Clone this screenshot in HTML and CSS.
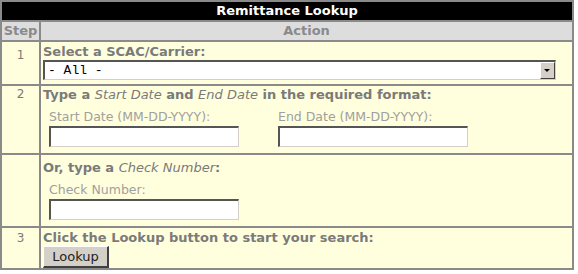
FILE: index.html
```html
<!DOCTYPE html>
<html lang="en">
<head>
    <meta charset="UTF-8">
    <title>Remittance Lookup</title>
    <link rel="stylesheet" href="styles.css">
</head>
<body>

<table class="lookup">
    <tr>
        <th colspan="2" class="title">Remittance Lookup</th>
    </tr>
    <tr class="head">
        <th class="step">Step</th>
        <th>Action</th>
    </tr>
    <tr class="row-scac">
        <td class="num">1</td>
        <td>
            <div class="prompt">Select a SCAC/Carrier:</div>
            <div class="select-wrap">
                <select id="scac">
                    <option>- All -</option>
                </select>
                <span class="arrow"></span>
            </div>
        </td>
    </tr>
    <tr class="row-dates">
        <td class="num">2</td>
        <td>
            <div class="prompt">Type a <em>Start Date</em> and <em>End Date</em> in the required format:</div>
            <div class="fields">
                <label class="field">
                    <span>Start Date (MM-DD-YYYY):</span>
                    <input type="text" id="startDate">
                </label>
                <label class="field">
                    <span>End Date (MM-DD-YYYY):</span>
                    <input type="text" id="endDate">
                </label>
            </div>
        </td>
    </tr>
    <tr class="row-check">
        <td class="num"></td>
        <td>
            <div class="prompt">Or, type a <em>Check Number</em>:</div>
            <div class="fields">
                <label class="field">
                    <span>Check Number:</span>
                    <input type="text" id="checkNumber">
                </label>
            </div>
        </td>
    </tr>
    <tr class="row-submit">
        <td class="num">3</td>
        <td>
            <div class="prompt">Click the Lookup button to start your search:</div>
            <button type="button" id="lookupBtn">Lookup</button>
        </td>
    </tr>
</table>

</body>
</html>
```

FILE: styles.css
```css
/* Page */
body {
    margin: 0;
    font-family: 'DejaVu Sans', Verdana, sans-serif;
    font-size: 12.5px;
    color: #7a7a7a;
    background-color: #fff;
}

/* Lookup table */
.lookup {
    width: 574px;
    border-collapse: collapse;
    border: 2px solid #8a8a8a;
}

.lookup th,
.lookup td {
    border: 2px solid #8a8a8a;
    padding: 0 2px;
    text-align: left;
    vertical-align: top;
}

.lookup td {
    background-color: #ffffdd;
}

.lookup .title {
    background-color: #000;
    color: #fff;
    font-size: 13px;
    font-weight: bold;
    line-height: 18px;
    padding: 0;
    text-align: center;
    vertical-align: middle;
}

.head th {
    background-color: #dddddd;
    color: #8a8a8a;
    font-size: 13px;
    line-height: 18px;
    text-align: center;
    vertical-align: middle;
}

.lookup .step {
    width: 37px;
    padding: 0;
}

.lookup .num {
    text-align: center;
    color: #7a7a7a;
    font-size: 12px;
    line-height: 15px;
}

.prompt {
    font-size: 13px;
    font-weight: bold;
    line-height: 15px;
}

.prompt em {
    font-weight: normal;
}

/* Row spacing */
.row-scac td {
    padding-top: 2px;
    padding-bottom: 4px;
}

.row-scac .num {
    padding-top: 6px;
}

.row-dates td {
    padding-top: 1px;
    padding-bottom: 6px;
}

.row-check td {
    padding-top: 5px;
    padding-bottom: 6px;
}

.row-submit td {
    padding-top: 2px;
    padding-bottom: 0;
}

.row-submit .num {
    padding-top: 3px;
}

/* Select box */
.select-wrap {
    position: relative;
    width: 513px;
    margin-top: 1px;
}

.select-wrap select {
    display: block;
    width: 100%;
    height: 20px;
    margin: 0;
    padding: 0 3px;
    font-family: 'Liberation Mono', 'Courier New', monospace;
    font-size: 13px;
    color: #000;
    background-color: #fff;
    border-style: solid;
    border-width: 2px 1px 1px 2px;
    border-color: #555 #d4d0c8 #d4d0c8 #555;
    border-radius: 0;
    -webkit-appearance: none;
    appearance: none;
}

.select-wrap .arrow {
    position: absolute;
    top: 2px;
    right: 1px;
    width: 15px;
    height: 17px;
    background-color: #d4d0c8;
    border-style: solid;
    border-width: 1px;
    border-color: #fff #404040 #404040 #fff;
    box-sizing: border-box;
    pointer-events: none;
}

.select-wrap .arrow::after {
    content: "";
    position: absolute;
    left: 3px;
    top: 6px;
    border-left: 3px solid transparent;
    border-right: 3px solid transparent;
    border-top: 3px solid #000;
}

/* Text fields */
.fields {
    display: flex;
    gap: 39px;
    padding-left: 6px;
    margin-top: 7px;
}

.field {
    display: flex;
    flex-direction: column;
    gap: 2px;
    color: #a0a0a0;
}

.field span {
    line-height: 15px;
}

.field input {
    width: 190px;
    height: 21px;
    margin: 0;
    padding: 0 2px;
    box-sizing: border-box;
    background-color: #fff;
    border-style: solid;
    border-width: 2px 1px 1px 2px;
    border-color: #555 #d4d0c8 #d4d0c8 #555;
    font-family: 'DejaVu Sans', Verdana, sans-serif;
    font-size: 12px;
}

/* Button */
#lookupBtn {
    display: block;
    width: 66px;
    height: 22px;
    margin-top: 1px;
    padding: 0;
    font-family: 'DejaVu Sans', Verdana, sans-serif;
    font-size: 13px;
    color: #222;
    background-color: #d4d0c8;
    border-style: solid;
    border-width: 1px 2px 2px 1px;
    border-color: #fff #404040 #404040 #fff;
    border-radius: 0;
}
```
